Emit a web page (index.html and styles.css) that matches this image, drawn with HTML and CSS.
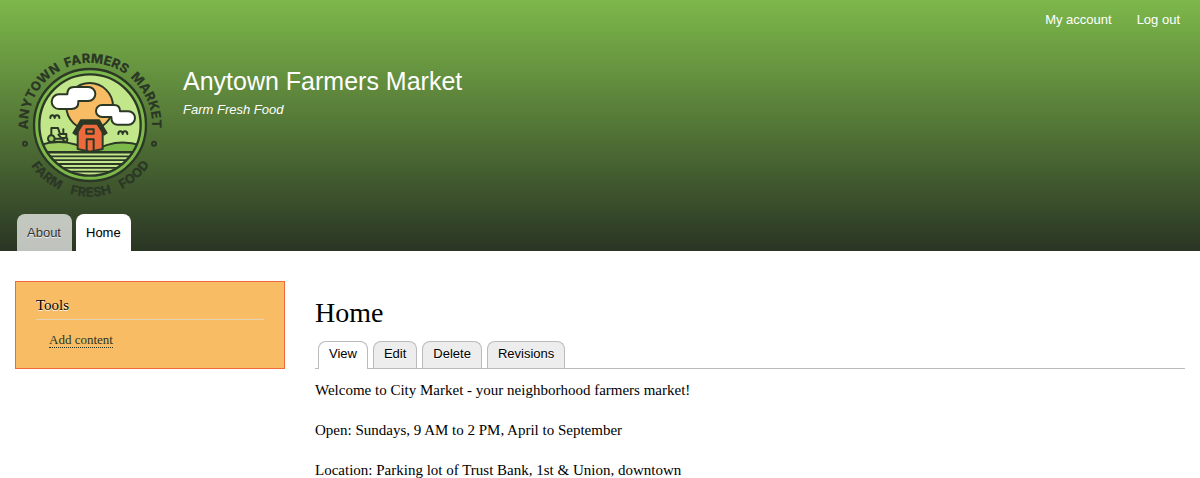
FILE: index.html
```html
<!DOCTYPE html>
<html lang="en">
<head>
<meta charset="utf-8">
<title>Home | Anytown Farmers Market</title>
<link rel="stylesheet" href="styles.css">
</head>
<body>
<header class="header">
  <nav class="account-menu" aria-label="User account menu">
    <a href="#">My account</a>
    <a href="#">Log out</a>
  </nav>
  <div class="branding">
    <a class="logo" href="#" aria-label="Anytown Farmers Market home">
      <svg viewBox="0 0 480 480" width="160" height="160">
        <defs>
          <path id="arc-top" d="M54 240A186 186 0 0 1 426 240"/>
          <path id="arc-bottom" d="M25 240A215 215 0 0 0 455 240"/>
          <clipPath id="scene"><circle cx="240" cy="240" r="151"/></clipPath>
        </defs>
        <circle cx="240" cy="240" r="168" fill="#7db84a" stroke="#2b3825" stroke-width="7"/>
        <circle cx="240" cy="240" r="151" fill="#c2e78a"/>
        <g clip-path="url(#scene)" stroke="#2b3825" stroke-width="6" stroke-linejoin="round" stroke-linecap="round">
          <circle cx="239" cy="184" r="70" fill="#f8bc65"/>
          <path d="M80 304Q165 272 246 321H80Z" fill="#9fcf62"/>
          <path d="M246 321Q320 274 400 304V321Z" fill="#7db84a"/>
          <path d="M80 323H400M80 334H400M80 345.500H400M80 357H400M80 368.500H400M80 380H400" fill="none" stroke-width="5.500"/>
          <path d="M203 312V258L219 230H262L278 258V312L240 320Z" fill="#ed6a3c"/>
          <path d="M198 270L189 264L212 225H268L291 264L282 270L261 237H219Z" fill="#2b3825" stroke-width="4"/>
          <rect x="229" y="253" width="22" height="13" fill="#ed6a3c" stroke-width="6"/>
          <path d="M230 317V283H251V317" fill="none" stroke-width="6"/>
          <path d="M147 148H172Q172 126 192 126H235A21 21 0 0 1 235 168H205V172Q205 192 184 192H147A22 22 0 0 1 147 148Z" fill="#fff"/>
          <path d="M276 180H312Q330 180 330 199H355A20 20 0 0 1 355 239H322Q304 239 304 216H276A18 18 0 0 1 276 180Z" fill="#fff"/>
          <path d="M121 219Q121 211 127 211Q134 211 134 219Q134 211 141 211Q148 211 148 219M325 267Q325 259 331 259Q338 259 338 267Q338 259 345 259Q352 259 352 267" fill="none"/>
          <path d="M124 270V249H144L150 267H169V290H130" fill="#c2e78a"/>
          <path d="M145 269L154 279H168M160 266V253M134 281H166" fill="none"/>
          <circle cx="124" cy="281" r="10" fill="#9fcf62"/>
          <circle cx="166" cy="284" r="6" fill="#9fcf62"/>
        </g>
        <circle cx="240" cy="240" r="152" fill="none" stroke="#2b3825" stroke-width="7"/>
        <g fill="none" stroke="#2b3825" stroke-width="6">
          <circle cx="45" cy="296" r="6"/>
          <circle cx="432" cy="296" r="6"/>
        </g>
        <g class="logo-text">
          <text><textPath href="#arc-top" startOffset="94">ANYTOWN</textPath></text>
          <text><textPath href="#arc-top" startOffset="312">FARMERS</textPath></text>
          <text><textPath href="#arc-top" startOffset="508">MARKET</textPath></text>
          <text><textPath href="#arc-bottom" startOffset="186">FARM</textPath></text>
          <text><textPath href="#arc-bottom" startOffset="340">FRESH</textPath></text>
          <text><textPath href="#arc-bottom" startOffset="493">FOOD</textPath></text>
        </g>
      </svg>
    </a>
    <div class="site-text">
      <a class="site-name" href="#">Anytown Farmers Market</a>
      <div class="slogan">Farm Fresh Food</div>
    </div>
  </div>
  <nav class="main-menu" aria-label="Main navigation">
    <a class="main-tab" href="#">About</a>
    <a class="main-tab main-tab-active" href="#" aria-current="page">Home</a>
  </nav>
</header>
<div class="page">
  <aside class="sidebar">
    <section class="block">
      <h2 class="block-title">Tools</h2>
      <ul class="block-menu">
        <li><a href="#">Add content</a></li>
      </ul>
    </section>
  </aside>
  <main class="content">
    <h1 class="page-title">Home</h1>
    <nav class="tabs" aria-label="Tabs">
      <a class="tab tab-active" href="#">View</a>
      <a class="tab" href="#">Edit</a>
      <a class="tab" href="#">Delete</a>
      <a class="tab" href="#">Revisions</a>
    </nav>
    <div class="body-text">
      <p>Welcome to City Market - your neighborhood farmers market!</p>
      <p>Open: Sundays, 9 AM to 2 PM, April to September</p>
      <p>Location: Parking lot of Trust Bank, 1st &amp; Union, downtown</p>
    </div>
  </main>
</div>
</body>
</html>
```
FILE: styles.css
```css
* {
  box-sizing: border-box;
}

body {
  margin: 0;
  background: #fff;
  color: #000;
  font-family: "Liberation Serif", "Times New Roman", serif;
  font-size: 15px;
}

a {
  color: inherit;
  text-decoration: none;
}

.header {
  padding: 0 15px 0 10px;
  background: linear-gradient(#7db84a, #2a3524);
  color: #fff;
  font-family: "Liberation Sans", Arial, sans-serif;
  font-size: 13px;
}

.account-menu {
  display: flex;
  justify-content: flex-end;
  gap: 25px;
  padding: 10px 5px 0 0;
  line-height: 20px;
}

.branding {
  display: flex;
  gap: 13px;
  padding-top: 15px;
}

.logo svg {
  display: block;
  overflow: visible;
}

.logo-text {
  fill: #2b3825;
  font-family: Inter, sans-serif;
  font-size: 39px;
  font-weight: 800;
  text-anchor: middle;
}

.site-text {
  padding-top: 21px;
}

.site-name {
  display: block;
  font-size: 25px;
  line-height: 30px;
}

.slogan {
  margin-top: 6px;
  font-style: italic;
  line-height: 16px;
}

.main-menu {
  display: flex;
  gap: 4px;
  padding: 9px 7px 0;
}

.main-tab {
  min-width: 55px;
  padding: 0 10px;
  border-radius: 8px 8px 0 0;
  background: rgba(255, 255, 255, 0.7);
  color: #333;
  line-height: 37px;
  text-shadow: 0 1px #eee;
}

.main-tab-active {
  background: #fff;
  color: #000;
}

.page {
  display: flex;
  gap: 30px;
  padding: 30px 15px 0;
}

.sidebar {
  flex: 0 0 270px;
}

.block {
  padding: 15px 20px 20px;
  border: 1px solid #ed6a3c;
  background: #f8bc65;
}

.block-title {
  margin: 0;
  padding-bottom: 5px;
  border-bottom: 1px solid #e6d3b5;
  font-size: 15px;
  font-weight: 400;
  line-height: 17px;
  text-shadow: 0 1px 0 #fff;
}

.block-menu {
  margin: 0;
  padding: 12px 0 1px 13px;
  list-style: none;
  color: #2a3524;
  font-size: 13px;
  line-height: 15px;
}

.block-menu a {
  border-bottom: 1px dotted;
}

.content {
  flex: 1;
  min-width: 0;
}

.page-title {
  margin: 16px 0 0;
  font-size: 28px;
  font-weight: 400;
  line-height: 32px;
}

.tabs {
  display: flex;
  gap: 5px;
  margin-top: 12px;
  padding-left: 3px;
  border-bottom: 1px solid #bbb;
  font-family: "Liberation Sans", Arial, sans-serif;
  font-size: 13px;
}

.tab {
  padding: 0 10px 2px;
  border: 1px solid #bbb;
  border-bottom: 0;
  border-radius: 8px 8px 0 0;
  background: #ededed;
  line-height: 24px;
  text-shadow: 0 1px #fff;
}

.tab-active {
  margin-bottom: -1px;
  background: #fff;
}

.body-text {
  padding-top: 10px;
  line-height: 23px;
}

.body-text p {
  margin: 0 0 17px;
}
```
